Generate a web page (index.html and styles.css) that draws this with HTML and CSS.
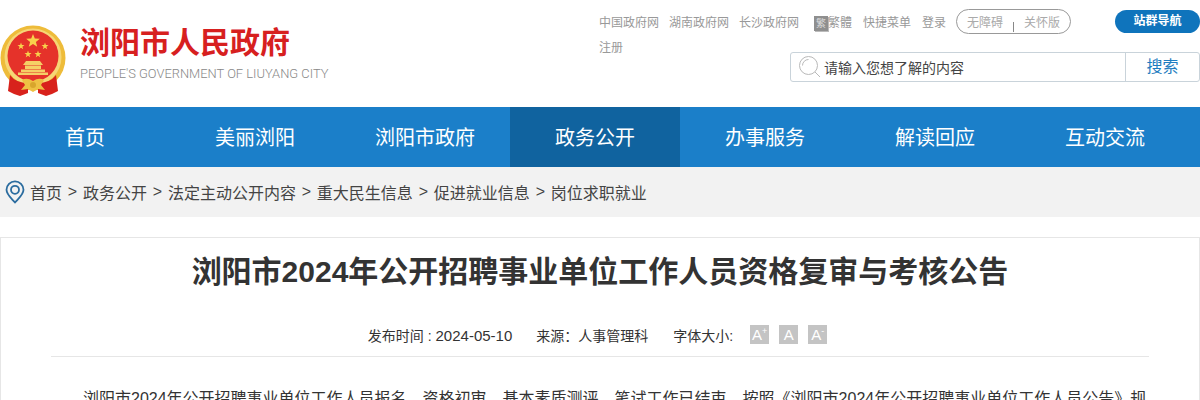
FILE: index.html
```html
<!DOCTYPE html>
<html lang="zh-CN">
<head>
    <meta charset="UTF-8">
    <meta name="viewport" content="width=device-width, initial-scale=1.0">
    <title>浏阳市2024年公开招聘事业单位工作人员资格复审与考核公告</title>
    <link rel="stylesheet" href="styles.css">
</head>
<body>
<header class="site-header">
    <div class="brand">
        <svg class="emblem" width="66" height="72" viewBox="0 0 66 72">
            <circle cx="33" cy="33" r="32.500" fill="#eebc3a"/>
            <circle cx="33" cy="32" r="28.500" fill="#f6d676"/>
            <circle cx="33" cy="31" r="25.500" fill="#e5322a"/>
            <polygon points="33,9 34.800,13.500 39.800,13.800 35.900,17 37.200,21.800 33,19.100 28.800,21.800 30.100,17 26.200,13.800 31.200,13.500" fill="#f8d24c"/>
            <polygon points="21,17.500 21.900,20 24.500,20.100 22.400,21.700 23.200,24.200 21,22.700 18.800,24.200 19.600,21.700 17.500,20.100 20.100,20" fill="#f8d24c"/>
            <polygon points="45,17.500 45.900,20 48.500,20.100 46.400,21.700 47.200,24.200 45,22.700 42.800,24.200 43.600,21.700 41.500,20.100 44.100,20" fill="#f8d24c"/>
            <polygon points="28,25.500 28.900,28 31.500,28.100 29.400,29.700 30.200,32.200 28,30.700 25.800,32.200 26.600,29.700 24.500,28.100 27.100,28" fill="#f8d24c"/>
            <polygon points="38,25.500 38.900,28 41.500,28.100 39.400,29.700 40.200,32.200 38,30.700 35.800,32.200 36.600,29.700 34.500,28.100 37.100,28" fill="#f8d24c"/>
            <path d="M26 36 H40 L43 40 H23 Z M25 40.500 H41 V44 H25 Z M21 44.500 H45 V47 H21 Z M18 47.500 H48 V50 H18 Z" fill="#f5cf66"/>
            <path d="M10 50 L8 66 L14 69 L20 71 L28 68 L28 58 Q16 58 10 50 Z" fill="#d8221c"/>
            <path d="M56 50 L58 66 L52 69 L46 71 L38 68 L38 58 Q50 58 56 50 Z" fill="#d8221c"/>
            <path d="M22 55 Q27 52 33 56 Q39 52 44 55 L41 60 L45 65 L38 64 L33 67 L28 64 L21 65 L25 60 Z" fill="#eec043"/>
            <circle cx="33" cy="60" r="3" fill="#d8a52c"/>
        </svg>
        <div class="brand-text">
            <div class="brand-name">浏阳市人民政府</div>
            <div class="brand-en">PEOPLE'S GOVERNMENT OF LIUYANG CITY</div>
        </div>
    </div>
    <div class="header-right">
        <div class="top-row">
            <div class="top-links">
                <a>中国政府网</a>
                <a>湖南政府网</a>
                <a>长沙政府网</a>
                <a class="lang"><span class="lang-icon">繁</span>繁體</a>
                <a class="shortcut">快捷菜单</a>
                <a>登录</a>
                <span class="mode-switch"><span>无障碍</span><i></i><span>关怀版</span></span>
                <a class="register">注册</a>
            </div>
            <a class="site-nav-btn">站群导航</a>
        </div>
        <div class="search-box">
            <svg class="search-icon" width="24" height="24" viewBox="0 0 24 24" fill="none" stroke="#b9b9b9">
                <circle cx="10.500" cy="10.500" r="9"/>
                <path d="M4.500 10.500 A6 6 0 0 1 10.500 4.500"/>
                <path d="M17 17 L22 22"/>
            </svg>
            <span class="search-text">请输入您想了解的内容</span>
            <a class="search-btn">搜索</a>
        </div>
    </div>
</header>

<nav class="main-nav">
    <a>首页</a>
    <a>美丽浏阳</a>
    <a>浏阳市政府</a>
    <a class="active">政务公开</a>
    <a>办事服务</a>
    <a>解读回应</a>
    <a>互动交流</a>
</nav>

<div class="breadcrumb">
    <svg class="pin" width="20" height="24" viewBox="0 0 20 24" fill="none" stroke="#2b6c9f" stroke-width="1.800">
        <path d="M10 22.500 C6 18 1.500 14.500 1.500 9.800 A8.500 8.500 0 0 1 18.500 9.800 C18.500 14.500 14 18 10 22.500 Z"/>
        <circle cx="10" cy="9.800" r="4"/>
    </svg>
    <a>首页</a><b>&gt;</b>
    <a>政务公开</a><b>&gt;</b>
    <a>法定主动公开内容</a><b>&gt;</b>
    <a>重大民生信息</a><b>&gt;</b>
    <a>促进就业信息</a><b>&gt;</b>
    <a>岗位求职就业</a>
</div>

<main class="article">
    <h1>浏阳市2024年公开招聘事业单位工作人员资格复审与考核公告</h1>
    <div class="meta">
        <span>发布时间 : <span class="date">2024-05-10</span></span>
        <span>来源：人事管理科</span>
        <span class="font-size">字体大小:
            <em>A<sup>+</sup></em>
            <em>A</em>
            <em>A<sup>-</sup></em>
        </span>
    </div>
    <p>浏阳市2024年公开招聘事业单位工作人员报名、资格初审、基本素质测评、笔试工作已结束，按照《浏阳市2024年公开招聘事业单位工作人员公告》规</p>
</main>
</body>
</html>
```

FILE: styles.css
```css
* {
    box-sizing: border-box;
}
body {
    font-family: "Liberation Sans", "Noto Sans CJK SC", sans-serif;
    margin: 0;
    padding: 0;
    background-color: #fff;
    color: #333;
    overflow: hidden;
}
.site-header {
    display: flex;
    justify-content: space-between;
    height: 107px;
}
.brand {
    display: flex;
    padding-top: 25px;
}
.emblem {
    flex: none;
}
.brand-text {
    margin-left: 14px;
}
.brand-name {
    font-size: 30px;
    line-height: 36px;
    font-weight: 700;
    color: #d7201f;
}
.brand-en {
    margin-top: 4px;
    font-family: Roboto, sans-serif;
    font-size: 12.900px;
    font-weight: 300;
    line-height: 18px;
    color: #888;
}
.header-right {
    width: 600px;
    padding-top: 9px;
}
.top-row {
    display: flex;
    justify-content: space-between;
    height: 43px;
}
.top-links {
    display: flex;
    flex-wrap: wrap;
    align-items: center;
    align-content: flex-start;
    width: 480px;
    margin-left: -1px;
    font-size: 12px;
    color: #999;
}
.top-links a {
    line-height: 28px;
    margin-right: 10px;
}
.top-links .lang {
    display: flex;
    align-items: center;
    margin-left: 5px;
    margin-right: 11px;
}
.top-links .shortcut {
    margin-right: 11px;
}
.lang-icon {
    width: 14px;
    height: 15px;
    background-color: #8f8f8f;
    color: #ddd;
    font-size: 10px;
    line-height: 15px;
    text-align: center;
    box-shadow: 1px 1px 0 #bbb;
}
.mode-switch {
    display: flex;
    align-items: center;
    justify-content: space-between;
    width: 115px;
    height: 25px;
    padding: 0 10px;
    margin-bottom: 3px;
    border: 1px solid #999;
    border-radius: 13px;
    color: #aaa;
}
.mode-switch i {
    width: 1px;
    height: 10px;
    margin-top: 10px;
    background-color: #888;
}
.top-links .register {
    line-height: 20px;
    margin-top: 1px;
}
.site-nav-btn {
    width: 85px;
    height: 23px;
    margin-top: 1px;
    border-radius: 12px;
    background-color: #0f74bc;
    color: #fff;
    font-size: 12px;
    font-weight: 700;
    line-height: 23px;
    text-align: center;
}
.search-box {
    display: flex;
    align-items: center;
    width: 410px;
    height: 30px;
    margin-left: 190px;
    border: 1px solid #c9d3da;
    border-radius: 3px;
}
.search-icon {
    margin-left: 7px;
}
.search-text {
    flex: 1;
    margin-left: 2px;
    font-size: 14px;
    color: #444;
}
.search-btn {
    width: 74px;
    border-left: 1px solid #c9d3da;
    color: #1d7cc0;
    font-size: 16px;
    line-height: 28px;
    text-align: center;
}
.main-nav {
    display: flex;
    height: 60px;
    background-color: #1b7fc9;
}
.main-nav a {
    width: 170px;
    padding-top: 2px;
    color: #fff;
    font-size: 20px;
    line-height: 58px;
    text-align: center;
}
.main-nav .active {
    background-color: #10639f;
}
.breadcrumb {
    display: flex;
    align-items: center;
    height: 50px;
    padding-left: 5px;
    background-color: #f2f2f2;
    font-size: 16px;
    color: #444;
}
.pin {
    margin-right: 5px;
}
.breadcrumb b {
    margin: 0 5.800px;
    font-weight: 400;
}
.article {
    margin-top: 20px;
    padding: 0 50px;
    border: 1px solid #e6e6e6;
}
.article h1 {
    margin: 0;
    padding-top: 13px;
    font-size: 30px;
    line-height: 42px;
    font-weight: 700;
    text-align: center;
}
.meta {
    display: flex;
    justify-content: center;
    align-items: center;
    gap: 24px;
    height: 54px;
    margin-top: 10px;
    padding: 10px 5px 0 0;
    border-bottom: 1px solid #e6e6e6;
    font-size: 14px;
}
.meta .date {
    font-size: 15px;
}
.meta .font-size {
    display: flex;
    align-items: center;
    margin-left: 1px;
}
.meta em {
    width: 19px;
    height: 19px;
    margin-left: 10px;
    background-color: #c4c4c4;
    color: #fff;
    font-style: normal;
    font-size: 15px;
    line-height: 19px;
    text-align: center;
}
.meta em:first-child {
    margin-left: 17px;
}
.meta sup {
    font-size: 9px;
    line-height: 0;
}
.article p {
    margin: 28px 0 0;
    font-size: 16px;
    line-height: 28px;
    text-indent: 32px;
}
```
